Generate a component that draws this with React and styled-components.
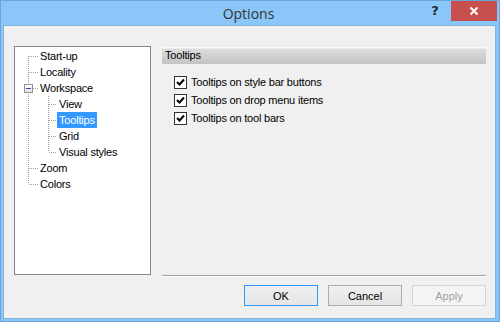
import styled, { createGlobalStyle } from 'styled-components';

const GlobalStyle = createGlobalStyle`
  html, body {
    margin: 0;
    padding: 0;
    background: #8ac6f7;
  }
  * {
    box-sizing: border-box;
  }
`;

const dotV = 'repeating-linear-gradient(to bottom, #a0a0a0 0 1px, transparent 1px 2px)';
const dotH = 'repeating-linear-gradient(to right, #a0a0a0 0 1px, transparent 1px 2px)';

const Window = styled.div`
  width: 500px;
  height: 322px;
  display: flex;
  flex-direction: column;
  background: #8ac6f7;
  box-shadow: inset 0 0 0 1px #6aa6dd;
  font-family: "Liberation Sans", Arial, sans-serif;
  font-size: 11px;
  letter-spacing: -0.2px;
  color: #000;
`;

const TitleBar = styled.div`
  height: 25px;
  flex: none;
  display: grid;
  grid-template-columns: 1fr auto 1fr;
  align-items: start;
  padding-right: 3px;
`;

const Title = styled.div`
  grid-column: 2;
  font-family: "Open Sans", "Noto Sans", sans-serif;
  font-size: 14px;
  letter-spacing: 0;
  color: #333;
  line-height: 28px;
`;

const Controls = styled.div`
  grid-column: 3;
  justify-self: end;
  display: flex;
  align-items: flex-start;
  padding-top: 1px;
`;

const HelpButton = styled.div`
  width: 20px;
  margin-right: 6px;
  text-align: center;
  font-family: "DejaVu Sans", sans-serif;
  font-weight: bold;
  font-size: 13px;
  letter-spacing: 0;
  line-height: 20px;
  color: #1e2a36;
`;

const CloseButton = styled.div`
  width: 46px;
  height: 20px;
  background: #c7504f;
  display: flex;
  align-items: center;
  justify-content: center;
`;

const Client = styled.div`
  flex: 1;
  margin: 0 4px 3px 3px;
  border: 1px solid #82b4e0;
  background: #f0f0f0;
  padding: 20px 9px 0 10px;
  display: flex;
  flex-direction: column;
`;

const Main = styled.div`
  display: flex;
  gap: 11px;
  height: 230px;
`;

const Tree = styled.div`
  width: 137px;
  height: 229px;
  flex: none;
  background: #fff;
  border: 1px solid #828790;
  padding-top: 1px;
`;

const Row = styled.div`
  display: flex;
  align-items: center;
  height: 16px;
`;

const vLayer = (x, v) => {
  const y = v === 'bottom' ? 8 : 0;
  const h = v === 'full' ? 16 : 8;
  return { img: dotV, pos: `${x}px ${y}px`, size: `1px ${h}px` };
};

const guideLayers = (p) => {
  const layers = [];
  if (p.$v) layers.push(vLayer(p.$x, p.$v));
  if (p.$h) layers.push({ img: dotH, pos: `${p.$x + 1}px 8px`, size: `${p.$w - p.$x - 1}px 1px` });
  return layers;
};

const Guide = styled.span`
  flex: none;
  display: flex;
  align-items: center;
  width: ${(p) => p.$w}px;
  height: 16px;
  background-repeat: no-repeat;
  background-image: ${(p) => guideLayers(p).map((l) => l.img).join(', ') || 'none'};
  background-position: ${(p) => guideLayers(p).map((l) => l.pos).join(', ') || '0 0'};
  background-size: ${(p) => guideLayers(p).map((l) => l.size).join(', ') || 'auto'};
`;

const Expander = styled.span`
  width: 9px;
  height: 9px;
  margin-left: 9px;
  border: 1px solid #919191;
  background: linear-gradient(#ffffff, #e2e2e2);
  display: flex;
  align-items: center;
  justify-content: center;
  &::after {
    content: '';
    width: 5px;
    height: 1px;
    background: #2f4f9a;
  }
`;

const Label = styled.span`
  padding: 0 2px;
  line-height: 16px;
  white-space: nowrap;
  background: ${(p) => (p.$selected ? '#3399ff' : 'transparent')};
  color: ${(p) => (p.$selected ? '#fff' : '#000')};
`;

const Panel = styled.div`
  flex: 1;
  display: flex;
  flex-direction: column;
  border-bottom: 1px solid #a0a0a0;
  box-shadow: 0 1px 0 #ffffff;
`;

const PanelHeader = styled.div`
  margin-top: 1px;
  height: 17px;
  padding-left: 3px;
  line-height: 16px;
  background: linear-gradient(#fafafa 0, #fafafa 1px, #dcdcdc 2px, #c3c3c3 100%);
`;

const Options = styled.div`
  margin-top: 9px;
  padding-left: 12px;
  display: flex;
  flex-direction: column;
`;

const OptionRow = styled.label`
  display: flex;
  align-items: center;
  gap: 4px;
  height: 18px;
`;

const Box = styled.span`
  width: 13px;
  height: 13px;
  flex: none;
  border: 1px solid #333;
  background: #fff;
  display: flex;
  align-items: center;
  justify-content: center;
`;

const Buttons = styled.div`
  margin-top: 9px;
  display: flex;
  justify-content: flex-end;
  gap: 10px;
`;

const Button = styled.div`
  width: 74px;
  height: 21px;
  display: flex;
  align-items: center;
  justify-content: center;
  letter-spacing: 0;
  border: 1px solid ${(p) => (p.$default ? '#3399ff' : p.$disabled ? '#d5d5d5' : '#acacac')};
  background: ${(p) => (p.$disabled ? '#f4f4f4' : 'linear-gradient(#f0f0f0, #e5e5e5)')};
  color: ${(p) => (p.$disabled ? '#a0a0a0' : '#000')};
`;

const tree = [
  { label: 'Start-up', v: 'bottom' },
  { label: 'Locality', v: 'full' },
  { label: 'Workspace', v: 'full', expander: true },
  { label: 'View', child: 'full' },
  { label: 'Tooltips', child: 'full', selected: true },
  { label: 'Grid', child: 'full' },
  { label: 'Visual styles', child: 'top' },
  { label: 'Zoom', v: 'full' },
  { label: 'Colors', v: 'top' },
];

const options = [
  'Tooltips on style bar buttons',
  'Tooltips on drop menu items',
  'Tooltips on tool bars',
];

const Check = () => (
  <svg width="9" height="9" viewBox="0 0 9 9">
    <path d="M1 4 L3.5 6.5 L8 1.5" fill="none" stroke="#000" strokeWidth="2" />
  </svg>
);

export default function App() {
  return (
    <>
      <GlobalStyle />
      <Window>
        <TitleBar>
          <Title>Options</Title>
          <Controls>
            <HelpButton>?</HelpButton>
            <CloseButton>
              <svg width="10" height="10" viewBox="0 0 10 10">
                <path d="M1.5 1.5 L8.5 8.5 M8.5 1.5 L1.5 8.5" stroke="#fff" strokeWidth="2" />
              </svg>
            </CloseButton>
          </Controls>
        </TitleBar>
        <Client>
          <Main>
            <Tree>
              {tree.map((item) => (
                <Row key={item.label}>
                  {item.child ? (
                    <>
                      <Guide $w={23} $x={13} $v="full" />
                      <Guide $w={19} $x={10} $v={item.child} $h />
                    </>
                  ) : (
                    <Guide $w={23} $x={13} $v={item.v} $h>
                      {item.expander && <Expander />}
                    </Guide>
                  )}
                  <Label $selected={item.selected}>{item.label}</Label>
                </Row>
              ))}
            </Tree>
            <Panel>
              <PanelHeader>Tooltips</PanelHeader>
              <Options>
                {options.map((text) => (
                  <OptionRow key={text}>
                    <Box>
                      <Check />
                    </Box>
                    {text}
                  </OptionRow>
                ))}
              </Options>
            </Panel>
          </Main>
          <Buttons>
            <Button $default>OK</Button>
            <Button>Cancel</Button>
            <Button $disabled>Apply</Button>
          </Buttons>
        </Client>
      </Window>
    </>
  );
}
